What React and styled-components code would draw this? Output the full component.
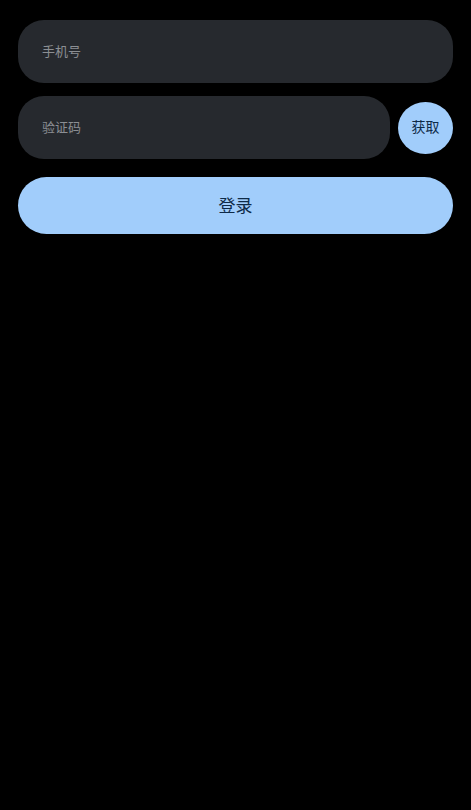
import React from 'react';
import styled, { createGlobalStyle } from 'styled-components';

const GlobalStyle = createGlobalStyle`
  html, body {
    margin: 0;
    padding: 0;
    background: #000;
  }
  body {
    font-family: "Noto Sans", "Noto Sans CJK SC", sans-serif;
  }
  * {
    box-sizing: border-box;
  }
`;

const Page = styled.div`
  min-height: 810px;
  background: #000;
  padding: 20px 18px;
  display: flex;
  flex-direction: column;
`;

const Field = styled.input`
  display: block;
  width: 100%;
  height: 63px;
  border: none;
  outline: none;
  border-radius: 26px;
  background: #26292e;
  color: #e4e6ea;
  padding: 0 24px 2px;
  font-family: "Noto Sans CJK SC", sans-serif;
  font-size: 13px;

  &::placeholder {
    color: #8b8e93;
  }
`;

const CodeRow = styled.div`
  display: flex;
  align-items: center;
  gap: 8px;
  margin-top: 13px;
`;

const CodeField = styled(Field)`
  flex: 1;
  min-width: 0;
`;

const FetchButton = styled.button`
  flex: none;
  width: 55px;
  height: 52px;
  border: none;
  border-radius: 50%;
  background: #a1cdfb;
  color: #0e2a47;
  font-family: "Noto Sans CJK SC", sans-serif;
  font-size: 14px;
  line-height: 1;
  padding: 0 0 3px;
  cursor: pointer;
`;

const LoginButton = styled.button`
  margin-top: 18px;
  width: 100%;
  height: 57px;
  border: none;
  border-radius: 29px;
  background: #a1cdfb;
  color: #0e2a47;
  font-family: "Noto Sans CJK SC", sans-serif;
  font-size: 17px;
  line-height: 1;
  padding: 0 0 3px;
  cursor: pointer;
`;

export default function App() {
  return (
    <>
      <GlobalStyle />
      <Page>
        <Field placeholder="手机号" />
        <CodeRow>
          <CodeField placeholder="验证码" />
          <FetchButton>获取</FetchButton>
        </CodeRow>
        <LoginButton>登录</LoginButton>
      </Page>
    </>
  );
}
